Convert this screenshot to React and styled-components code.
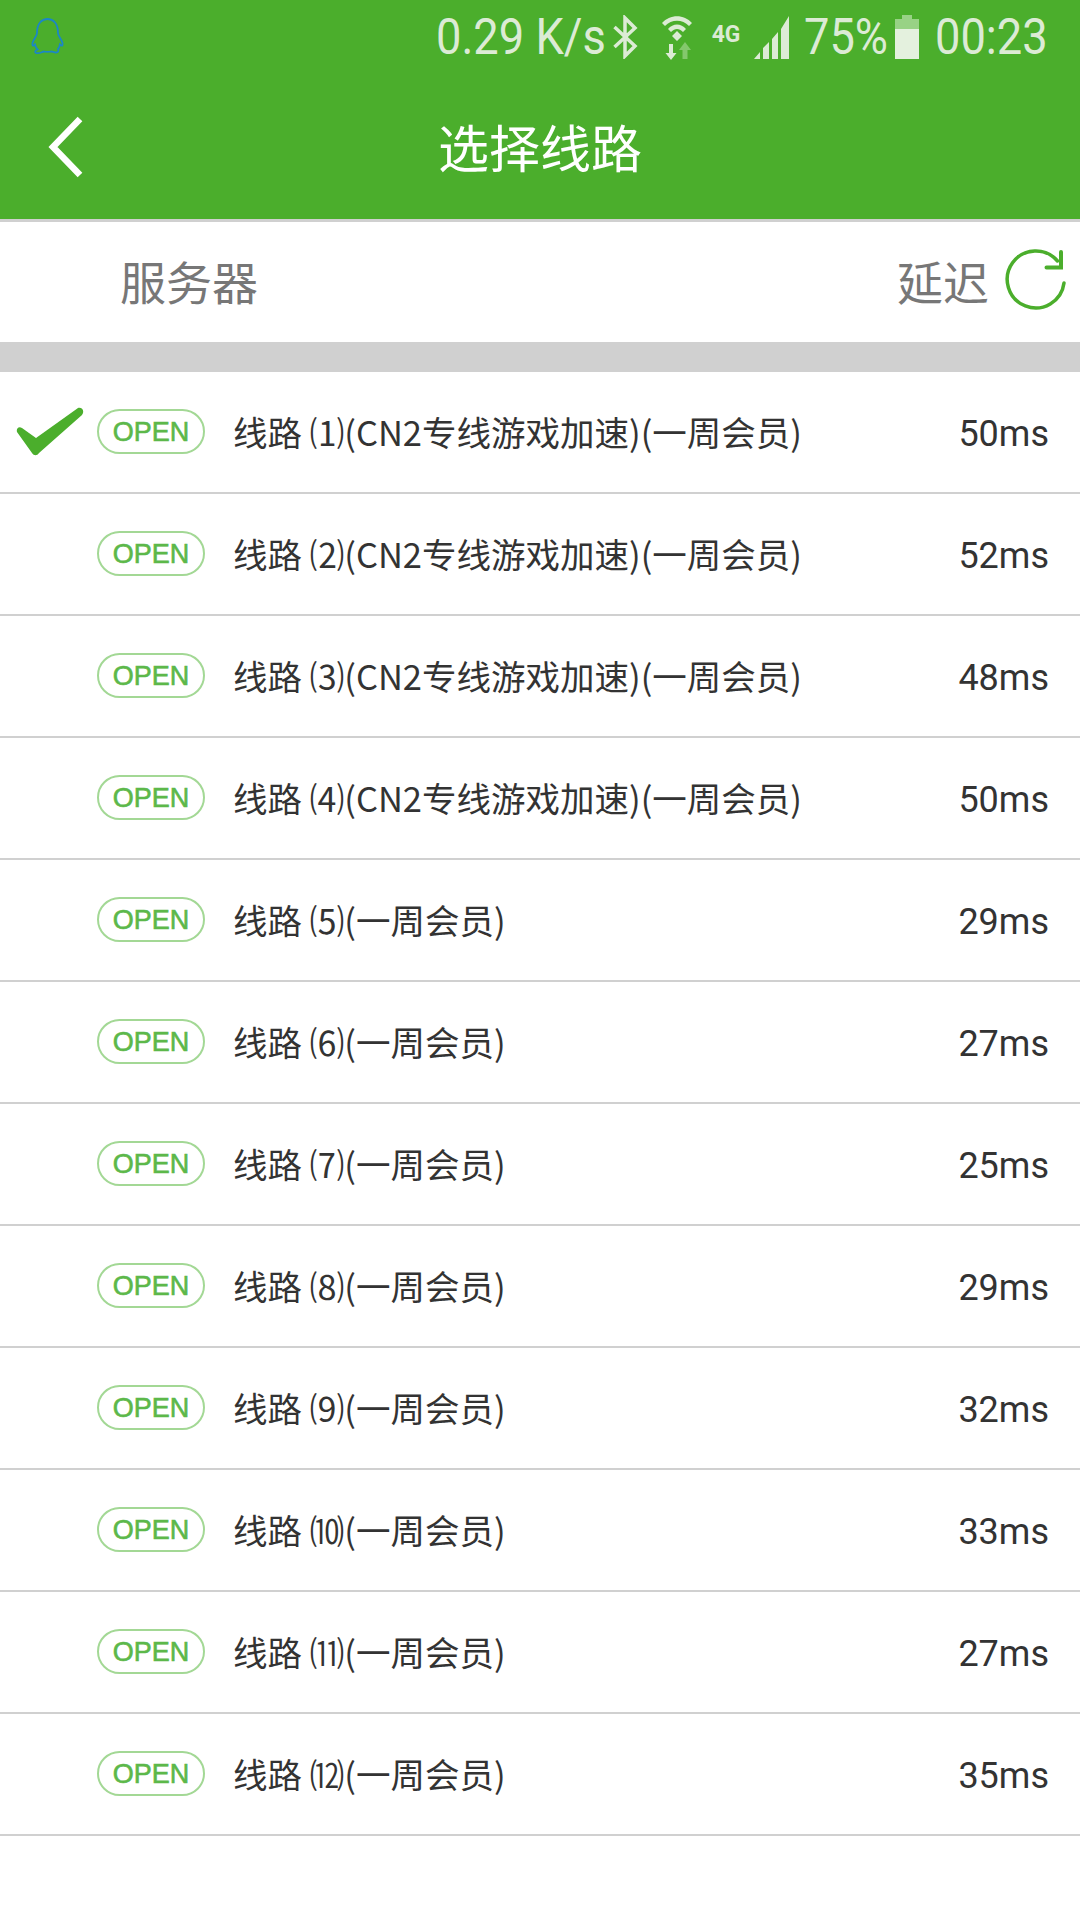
import React from 'react';
import styled, { createGlobalStyle } from 'styled-components';

const GREEN = '#4bae2c';

const GlobalStyle = createGlobalStyle`
  html, body {
    margin: 0;
    padding: 0;
    background: #fff;
  }
  body {
    font-family: 'Roboto', 'Noto Sans CJK SC', sans-serif;
  }
`;

const lines = [
  { name: '线路 ⑴(CN2专线游戏加速)(一周会员)', ms: '50ms', active: true },
  { name: '线路 ⑵(CN2专线游戏加速)(一周会员)', ms: '52ms' },
  { name: '线路 ⑶(CN2专线游戏加速)(一周会员)', ms: '48ms' },
  { name: '线路 ⑷(CN2专线游戏加速)(一周会员)', ms: '50ms' },
  { name: '线路 ⑸(一周会员)', ms: '29ms' },
  { name: '线路 ⑹(一周会员)', ms: '27ms' },
  { name: '线路 ⑺(一周会员)', ms: '25ms' },
  { name: '线路 ⑻(一周会员)', ms: '29ms' },
  { name: '线路 ⑼(一周会员)', ms: '32ms' },
  { name: '线路 ⑽(一周会员)', ms: '33ms' },
  { name: '线路 ⑾(一周会员)', ms: '27ms' },
  { name: '线路 ⑿(一周会员)', ms: '35ms' },
];

const App = () => {
  return (
    <Page>
      <GlobalStyle />
      <Top>
        <StatusBar>
          <Penguin width='33' height='37' viewBox='0 0 33 37' fill='none' stroke='#1b86c8' strokeWidth='1.800'>
            <path d='M6 15C6 5 11 1 16.500 1S27 5 27 15C27 18 30 20 31.500 25C32 28 31 28.500 29 26.500C28.500 29 28 30 27 31C28 33 27 34.500 25 34.500C23 34.500 21.500 33.500 20 33.500C18 34 15 34 13 33.500C11 33.500 9 36 5 35C3.500 34 4 32.500 6.500 31.500C5 30 4.500 28.500 4 26.500C2 28.500 1 28 1.500 25C3 20 6 18 6 15Z' />
          </Penguin>
          <StatusText $width={167} $gap={0}>0.29 K/s</StatusText>
          <StatusIcon $gap={10} width='25' height='44' viewBox='0 0 25 44' fill='none' stroke='#dcebd5' strokeWidth='3.500'>
            <path d='M1.500 12L22 31L12 41V3L22 13L1.500 32' />
          </StatusIcon>
          <StatusIcon $gap={23} width='32' height='46' viewBox='0 0 32 46'>
            <path d='M1 9C9 0 23 0 31 9L28 12C21.500 5 10.500 5 4 12Z M7 15C12 9 20 9 25 15L22 18C18 14 14 14 10 18Z M16 17L21 22L16 27L11 22Z' fill='#dcebd5' />
            <path d='M8 30H12V39H15.500L10 46L4.500 39H8Z' fill='#dcebd5' />
            <path d='M24 28L30 36H26.500V45H21.500V36H18Z' fill='#84c86d' />
          </StatusIcon>
          <FourG $gap={18}>4G</FourG>
          <StatusIcon $gap={13} width='36' height='44' viewBox='0 0 36 44'>
            <path d='M0 44L6 37V44Z M9 33L15 27V44H9Z M18 24L24 17V44H18Z M27 14L35 1V44H27Z' fill='#dcebd5' />
          </StatusIcon>
          <StatusText $width={80} $gap={14}>75%</StatusText>
          <StatusIcon $gap={11} width='24' height='44' viewBox='0 0 24 44'>
            <path d='M7 0H17V4H24V14H0V4H7Z' fill='#98d285' />
            <path d='M0 14H24V44H0Z' fill='#e4f1de' />
          </StatusIcon>
          <StatusText $width={108} $gap={16}>00:23</StatusText>
        </StatusBar>
        <NavBar>
          <BackButton>
            <svg width='40' height='68' viewBox='0 0 40 68' fill='none' stroke='#fff' strokeWidth='6.500'>
              <path d='M33 5L6 33L33 61' />
            </svg>
          </BackButton>
          <Title>选择线路</Title>
        </NavBar>
      </Top>

      <ListHeader>
        <HeaderLabel>服务器</HeaderLabel>
        <HeaderRight>
          <HeaderLabel>延迟</HeaderLabel>
          <svg width='62' height='62' viewBox='0 0 62 62' fill='none' stroke={GREEN} strokeWidth='3.500' strokeLinecap='round'>
            <path d='M59 34A28.500 28.500 0 1 1 52.500 12' />
            <path d='M56 3V18.500H41.500' strokeWidth='4' />
          </svg>
        </HeaderRight>
      </ListHeader>
      <Band />

      <List>
        {lines.map((line) => (
          <Row key={line.name}>
            <CheckSlot>
              {line.active && (
                <svg width='68' height='50' viewBox='0 0 68 50'>
                  <path d='M6 21C3 19 0 21 1 25L16 46C18 49 21 49 23 46L66 8C69 4 66 0 62 1L20 31Z' fill={GREEN} />
                </svg>
              )}
            </CheckSlot>
            <Badge>OPEN</Badge>
            <LineName>{line.name}</LineName>
            <Latency>{line.ms}</Latency>
          </Row>
        ))}
      </List>
    </Page>
  );
};

const Page = styled.div`
  width: 1080px;
  height: 1920px;
  overflow: hidden;
  background: #fff;
`;

const Top = styled.header`
  background: ${GREEN};
  border-bottom: 3px solid #d0d0d0;
`;

const StatusBar = styled.div`
  height: 73px;
  display: flex;
  align-items: center;
  padding-left: 31px;
`;

const Penguin = styled.svg`
  flex: none;
  margin-right: 372px;
`;

const StatusText = styled.span`
  flex: none;
  width: ${(p) => p.$width}px;
  margin-left: ${(p) => p.$gap}px;
  font-size: 50px;
  line-height: 78px;
  color: #dcebd5;
  white-space: nowrap;
  transform: scaleX(0.905);
  transform-origin: left center;
`;

const StatusIcon = styled.svg`
  flex: none;
  margin-left: ${(p) => p.$gap}px;
`;

const FourG = styled.span`
  flex: none;
  align-self: flex-start;
  margin: 20px 0 0 ${(p) => p.$gap}px;
  font-size: 24px;
  line-height: 28px;
  font-weight: 700;
  color: #dcebd5;
  transform: scaleX(0.95);
`;

const NavBar = styled.div`
  position: relative;
  height: 146px;
  display: flex;
  align-items: center;
  justify-content: center;
`;

const BackButton = styled.div`
  position: absolute;
  left: 47px;
  top: 41px;
  line-height: 0;
`;

const Title = styled.h1`
  margin: 0;
  font-family: 'Noto Sans CJK SC', sans-serif;
  font-size: 51px;
  font-weight: 400;
  color: #fff;
`;

const ListHeader = styled.div`
  height: 120px;
  display: flex;
  align-items: center;
  justify-content: space-between;
  padding: 0 13px 5px 120px;
  box-sizing: border-box;
`;

const HeaderLabel = styled.span`
  font-family: 'Noto Sans CJK SC', sans-serif;
  font-size: 46px;
  color: #777;
`;

const HeaderRight = styled.div`
  display: flex;
  align-items: center;
  gap: 16px;
`;

const Band = styled.div`
  height: 30px;
  background: #d0d0d0;
`;

const List = styled.div`
  display: flex;
  flex-direction: column;
`;

const Row = styled.div`
  box-sizing: border-box;
  height: 122px;
  display: flex;
  align-items: center;
  border-bottom: 2px solid #d0d0d0;
`;

const CheckSlot = styled.div`
  flex: none;
  width: 97px;
  padding-left: 16px;
  box-sizing: border-box;
  line-height: 0;
`;

const Badge = styled.span`
  flex: none;
  box-sizing: border-box;
  width: 108px;
  height: 45px;
  margin-bottom: 2px;
  padding-top: 3px;
  display: flex;
  align-items: center;
  justify-content: center;
  border: 2.5px solid #a3d895;
  border-radius: 23px;
  font-family: 'Liberation Sans', sans-serif;
  font-size: 27px;
  color: #5cb84a;
  -webkit-text-stroke: 0.6px #5cb84a;
`;

const LineName = styled.span`
  flex: 1;
  margin: 0 0 2px 28px;
  font-family: 'Noto Sans CJK SC', sans-serif;
  font-size: 34.500px;
  color: #333;
  white-space: nowrap;
`;

const Latency = styled.span`
  flex: none;
  margin: 3px 31px 0 0;
  font-family: 'Roboto', sans-serif;
  font-size: 36px;
  color: #333;
`;

export default App;
